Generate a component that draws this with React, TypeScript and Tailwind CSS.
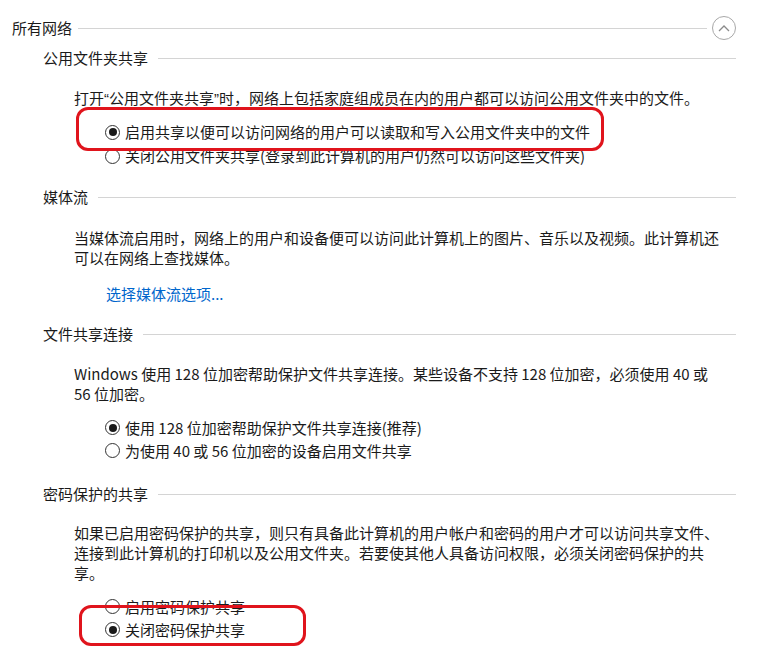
import React from "react";

const font = { fontFamily: '"Noto Sans CJK SC", "Noto Sans", sans-serif' };
const latin = { fontFamily: '"Liberation Sans", "Noto Sans", sans-serif' };

function Radio({ checked, label }: { checked?: boolean; label: string }) {
  return (
    <div className="flex items-center h-[24px]">
      <span className="w-[15px] h-[15px] rounded-full border border-[#333] bg-white flex items-center justify-center shrink-0">
        {checked && <span className="w-[8px] h-[8px] rounded-full bg-[#1a1a1a]" />}
      </span>
      <span className="ml-[5px] whitespace-nowrap">{label}</span>
    </div>
  );
}

function Heading({ title, className = "" }: { title: string; className?: string }) {
  return (
    <div className={`flex items-center h-[20px] ${className}`}>
      <span className="whitespace-nowrap">{title}</span>
      <div className="flex-1 h-px bg-[#d4d4d4] ml-[10px] mt-[1px]" />
    </div>
  );
}

export default function App() {
  return (
    <div
      className="relative w-[760px] h-[655px] bg-white overflow-hidden text-[15px] leading-[20px] text-[#1a1a1a] pl-[12px] pr-[24px] pt-[16px]"
      style={font}
    >
      {/* 所有网络 header */}
      <div className="flex items-center h-[24px]">
        <span className="whitespace-nowrap">所有网络</span>
        <div className="flex-1 h-px bg-[#d4d4d4] ml-[6px]" />
        <button
          type="button"
          className="ml-[5px] w-[24px] h-[24px] rounded-full border border-[#a8a8a8] flex items-center justify-center shrink-0"
        >
          <svg width="12" height="8" viewBox="0 0 12 8" fill="none">
            <path d="M1 7L6 2L11 7" stroke="#8a8a8a" strokeWidth="1.3" />
          </svg>
        </button>
      </div>

      <div className="ml-[31px]">
        {/* 公用文件夹共享 */}
        <Heading title="公用文件夹共享" className="mt-[8px]" />
        <div className="pl-[31px]">
          <p className="mt-[20px] w-[652px]">
            打开<span style={latin}>“</span>公用文件夹共享<span style={latin}>”</span>时，网络上包括家庭组成员在内的用户都可以访问公用文件夹中的文件。
          </p>
          <div className="pl-[31px] mt-[11px]">
            <Radio checked label="启用共享以便可以访问网络的用户可以读取和写入公用文件夹中的文件" />
            <Radio label="关闭公用文件夹共享(登录到此计算机的用户仍然可以访问这些文件夹)" />
          </div>
        </div>

        {/* 媒体流 */}
        <Heading title="媒体流" className="mt-[19px]" />
        <div className="pl-[31px]">
          <p className="mt-[21px] w-[652px]">
            当媒体流启用时，网络上的用户和设备便可以访问此计算机上的图片、音乐以及视频。此计算机还可以在网络上查找媒体。
          </p>
          <div className="pl-[32px] mt-[16px]">
            <a className="text-[#0066cc] cursor-pointer">选择媒体流选项...</a>
          </div>
        </div>

        {/* 文件共享连接 */}
        <Heading title="文件共享连接" className="mt-[20px]" />
        <div className="pl-[31px]">
          <p className="mt-[20px] w-[652px]">
            Windows 使用 128 位加密帮助保护文件共享连接。某些设备不支持 128 位加密，必须使用 40 或 56 位加密。
          </p>
          <div className="pl-[31px] mt-[12px]">
            <div className="h-[23px] flex items-center">
              <Radio checked label="使用 128 位加密帮助保护文件共享连接(推荐)" />
            </div>
            <div className="h-[23px] flex items-center">
              <Radio label="为使用 40 或 56 位加密的设备启用文件共享" />
            </div>
          </div>
        </div>

        {/* 密码保护的共享 */}
        <Heading title="密码保护的共享" className="mt-[22px]" />
        <div className="pl-[31px]">
          <p className="mt-[19px] w-[652px]">
            如果已启用密码保护的共享，则只有具备此计算机的用户帐户和密码的用户才可以访问共享文件、连接到此计算机的打印机以及公用文件夹。若要使其他人具备访问权限，必须关闭密码保护的共享。
          </p>
          <div className="pl-[31px] mt-[12px]">
            <div className="h-[23px] flex items-center">
              <Radio label="启用密码保护共享" />
            </div>
            <div className="h-[23px] flex items-center">
              <Radio checked label="关闭密码保护共享" />
            </div>
          </div>
        </div>
      </div>

      {/* red annotation boxes */}
      <div className="absolute left-[76px] top-[107px] w-[528px] h-[44px] border-[3px] border-[#e0141c] rounded-[12px] pointer-events-none" />
      <div className="absolute left-[79px] top-[605px] w-[227px] h-[41px] border-[3px] border-[#e0141c] rounded-[12px] pointer-events-none" />
    </div>
  );
}
